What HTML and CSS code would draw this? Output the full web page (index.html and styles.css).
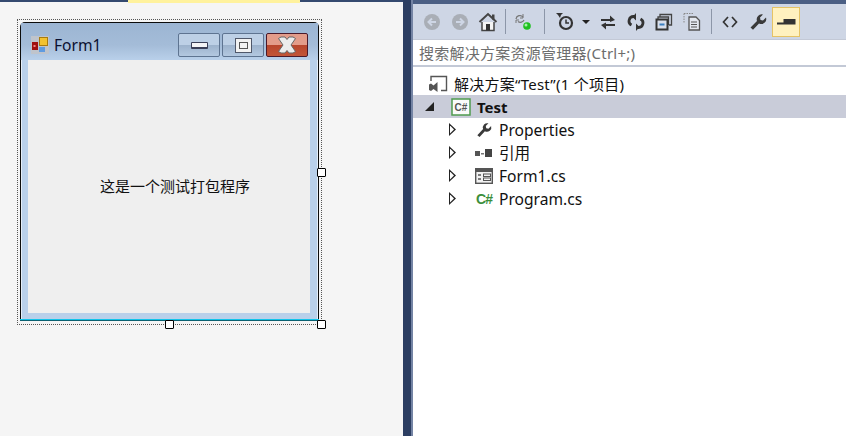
FILE: index.html
```html
<!DOCTYPE html>
<html lang="zh">
<head>
<meta charset="utf-8">
<title>Form1 - Test</title>
<link rel="stylesheet" href="styles.css">
</head>
<body>
<main class="app">
  <section class="designer">
    <div class="strip"><span class="strip-a"></span><span class="strip-b"></span><span class="strip-c"></span></div>
    <div class="selection">
      <div class="form">
        <div class="titlebar">
          <svg class="form-icon" width="18" height="18" viewBox="0 0 18 18">
            <rect width="18" height="18" fill="#bfc4cc"/>
            <rect x="1" y="6" width="6" height="8" fill="#a01010"/><rect x="2.500" y="9" width="2" height="2" fill="#f08080"/>
            <rect x="8.500" y="1.500" width="8" height="8" fill="#f2c230" stroke="#a87b10"/>
            <rect x="8" y="11" width="6" height="5" fill="#5f9be0"/>
          </svg>
          <span class="form-title">Form1</span>
          <div class="caption-btns">
            <div class="cap cap-min"><span class="min-glyph"></span></div>
            <div class="cap cap-max"><span class="max-glyph"></span></div>
            <div class="cap cap-close">
              <svg width="20" height="18" viewBox="0 0 20 18"><path d="M1.500 2.500 4 1h4l2 2.500L12 1h4l2.500 1.500L14 9l4.500 6.500L16 17h-4l-2-2.500L8 17H4l-2.500-1.500L6 9z" fill="#ececec" stroke="#666" stroke-width="1"/></svg>
            </div>
          </div>
        </div>
        <div class="client"><span class="label">这是一个测试打包程序</span></div>
        <i class="rim"></i>
      </div>
      <i class="handle h-right"></i><i class="handle h-bottom"></i><i class="handle h-corner"></i>
    </div>
  </section>
  <div class="splitter"></div>
  <section class="explorer">
    <div class="topline"></div>
    <div class="toolbar">
      <span class="tool"><svg width="18" height="18" viewBox="0 0 18 18"><circle cx="9" cy="9" r="8" fill="#a9aeb6"/><path d="M13 9H6M9 5.500 5.500 9 9 12.500" fill="none" stroke="#ced6e5" stroke-width="2"/></svg></span>
      <span class="tool"><svg width="18" height="18" viewBox="0 0 18 18"><circle cx="9" cy="9" r="8" fill="#a9aeb6"/><path d="M5 9h7M9 5.500 12.500 9 9 12.500" fill="none" stroke="#ced6e5" stroke-width="2"/></svg></span>
      <span class="tool"><svg width="20" height="20" viewBox="0 0 20 20"><path d="M1.500 10 10 2l8.500 8" fill="none" stroke="#444" stroke-width="2"/><path d="M4 10v8.500h12V10" fill="#f4f4f4" stroke="#444" stroke-width="1.500"/><rect x="8" y="12" width="4" height="6.500" fill="#333"/><rect x="14" y="2.500" width="2.500" height="5" fill="#444"/></svg></span>
      <span class="sep"></span>
      <span class="tool tool-sync"><svg width="20" height="20" viewBox="0 0 20 20"><path d="M3 7a4 4 0 0 1 7-2M11 8a4 4 0 0 1-6 1.500" fill="none" stroke="#777" stroke-width="1.300"/><path d="M10 2v4H7M3 11V8h3" fill="none" stroke="#777"/><circle cx="14" cy="14" r="3.800" fill="#1fc01f"/><circle cx="13" cy="13" r="1.500" fill="#a6f2a6"/></svg></span>
      <span class="sep sep-b"></span>
      <span class="tool"><svg width="20" height="20" viewBox="0 0 20 20"><circle cx="11" cy="11" r="6" fill="none" stroke="#333" stroke-width="2.200"/><path d="M11 7.500V11h3" fill="none" stroke="#333" stroke-width="1.500"/><path d="M1 1h7L6 3l-1 3-2-3z" fill="#333"/></svg></span>
      <span class="drop"></span>
      <span class="tool"><svg width="18" height="18" viewBox="0 0 18 18"><path d="M2 7h10" fill="none" stroke="#333" stroke-width="2"/><path d="M11 2.500 16 7l-5 2z" fill="#333"/><path d="M16 12H6" fill="none" stroke="#333" stroke-width="2"/><path d="M7 9.500 2 12l5 4.500z" fill="#333"/></svg></span>
      <span class="tool"><svg width="18" height="18" viewBox="0 0 18 18"><path d="M9 3.500H6.500a4.500 4.500 0 0 0-2 8.500M9 14.500h2.500a4.500 4.500 0 0 0 2-8.500" fill="none" stroke="#333" stroke-width="2.800"/><path d="M9 0v7.500L5.500 4zM9 18v-7.500l3.500 3.500z" fill="#333"/></svg></span>
      <span class="tool"><svg width="18" height="18" viewBox="0 0 18 18"><path d="M5 4V1.500h11.500V12H14M3 7V4h10.500v8" fill="none" stroke="#444" stroke-width="1.300"/><rect x="1.500" y="6.500" width="11" height="10" fill="#d8deea" stroke="#333" stroke-width="2"/><rect x="4.500" y="10.500" width="5" height="2" fill="#3a7fc0"/></svg></span>
      <span class="tool"><svg width="18" height="20" viewBox="0 0 18 20"><path d="M1 1.500h9M1 1.500v9" fill="none" stroke="#888" stroke-dasharray="1.500 1"/><path d="M6 5h7l3.500 3.500V18H6z" fill="#e4e8f0" stroke="#555" stroke-width="1.300"/><path d="M8 10h6M8 12.500h6M8 15h6" stroke="#555"/></svg></span>
      <span class="sep sep-c"></span>
      <span class="tool tool-code"><svg width="16" height="12" viewBox="0 0 16 12"><path d="M6 1 1.500 6 6 11M10 1l4.500 5L10 11" fill="none" stroke="#333" stroke-width="1.700"/></svg></span>
      <span class="tool"><svg width="18" height="18" viewBox="0 0 18 18"><path d="M1.500 14.500 8 8a5 5 0 0 1 6-6.500l-3 3 .5 2.500 2.500.5 3-3A5 5 0 0 1 10 10.500L4 16.800z" fill="#3a3a3a"/></svg></span>
      <span class="pin"><span class="pin-glyph"></span></span>
    </div>
    <div class="search">搜索解决方案资源管理器(Ctrl+;)</div>
    <ul class="tree">
      <li class="row row-sol">
        <svg class="sol-icon" width="20" height="18" viewBox="0 0 20 18"><path d="M3 6V1.500h15.500v14H13" fill="none" stroke="#555" stroke-width="1.400"/><path d="M1 9.500 3 8.500l2.500 2 4-3.500v10l-4-3-2.500 2-2-1z" fill="#555"/></svg>
        <span class="sol-name">解决方案“Test”(1 个项目)</span>
      </li>
      <li class="row row-sel">
        <span class="tri-open"></span>
        <svg class="proj-icon" width="20" height="18" viewBox="0 0 20 18"><rect x="1" y="1" width="18" height="16" fill="#fafafa" stroke="#4f9a4f" stroke-width="1.500"/><text x="3.500" y="13" class="cs-mini">C#</text></svg>
        <strong class="proj-name">Test</strong>
      </li>
      <li class="row row-child">
        <span class="tri"></span>
        <span class="slot"><svg width="18" height="16" viewBox="0 0 18 18"><path d="M1.500 15 8 8a5 5 0 0 1 6-6.500l-3 3 .5 2.500 2.500.5 3-3A5 5 0 0 1 10 10.500L4 17z" fill="#3a3a3a"/></svg></span>
        <span class="name">Properties</span>
      </li>
      <li class="row row-child">
        <span class="tri"></span>
        <span class="slot"><svg width="20" height="10" viewBox="0 0 20 10"><rect x="1" y="3" width="5" height="5" fill="#555"/><rect x="7" y="5" width="3" height="1.500" fill="#777"/><rect x="11" y="1" width="7" height="8" fill="#444"/></svg></span>
        <span class="name">引用</span>
      </li>
      <li class="row row-child">
        <span class="tri"></span>
        <span class="slot"><svg width="18" height="16" viewBox="0 0 18 16"><rect x=".7" y=".7" width="16.600" height="14.600" fill="#f2f2f2" stroke="#555" stroke-width="1.400"/><rect x="1" y="1" width="16" height="3" fill="#555"/><path d="M3 7h3M3 11h3" stroke="#555" stroke-width="1.500"/><rect x="8.500" y="6" width="7" height="2.500" fill="none" stroke="#555"/><rect x="8.500" y="10" width="7" height="2.500" fill="none" stroke="#555"/></svg></span>
        <span class="name">Form1.cs</span>
      </li>
      <li class="row row-child">
        <span class="tri"></span>
        <span class="slot"><span class="cs">C#</span></span>
        <span class="name">Program.cs</span>
      </li>
    </ul>
  </section>
</main>
</body>
</html>
```
FILE: styles.css
```css
* { box-sizing: border-box; }
html, body { margin: 0; padding: 0; }
body { width: 846px; height: 436px; overflow: hidden; font-family: "Noto Sans", "Noto Sans CJK SC", sans-serif; color: #111; }
.app { display: flex; width: 846px; height: 436px; }

.designer { width: 403px; background: #f5f5f5; }
.strip { display: flex; height: 3px; }
.strip-a { width: 128px; background: linear-gradient(#34496f 2px, #f5f5f5 2px); }
.strip-b { width: 172px; background: #fff29d; }
.strip-c { flex: 1; background: linear-gradient(#34496f 2px, #f5f5f5 2px); }

.selection { position: relative; width: 305px; height: 306px; margin: 16px 0 0 17px; padding: 2px 1px 2px 2px; border: 1px dotted #555; }
.form { position: relative; display: flex; flex-direction: column; width: 299px; height: 299px; border: 1px solid #0c0c0c; border-bottom: 0; border-radius: 5px 5px 0 0; background: #b9d0ea; box-shadow: inset 1px 0 0 #e3edf8, inset -1px 0 0 #e3edf8; }
.rim { position: absolute; left: -1px; right: -1px; bottom: 0; height: 2px; background: #12c4ea; border-bottom: 1px solid #0a6070; }
.titlebar { display: flex; align-items: center; height: 37px; padding: 7px 0 0 10px; background: linear-gradient(#9cb5d3 0, #a4bcd8 22px, #b9d0ea 37px); }
.form-icon { flex: none; }
.form-title { margin-left: 5px; font-size: 15.600px; color: #0b1030; }
.caption-btns { display: flex; gap: 2px; margin-left: auto; margin-right: 10px; }
.cap { display: flex; align-items: center; justify-content: center; width: 42px; height: 24px; border: 1px solid #5e7491; border-radius: 2px; background: linear-gradient(#bdd0e6 50%, #9cb2cc 50%, #b3c8e0); }
.cap-close { border-color: #4b1a2a; background: linear-gradient(#e39c8a 50%, #b8452c 50%, #c25638); }
.min-glyph { width: 17px; height: 7px; background: #f4f4f6; border: 1px solid #3a3f58; border-bottom-width: 2px; border-radius: 1px; }
.max-glyph { display: block; width: 17px; height: 15px; background: #f2f2f2; border: 1px solid #50586a; box-shadow: inset 0 0 0 3px #f2f2f2, inset 0 0 0 4px #555; }
.client { display: flex; align-items: center; justify-content: center; width: 282px; height: 253px; margin-left: 7px; padding: 0 0 2px 12px; background: #efefef; }
.label { font-size: 15px; line-height: 20px; white-space: nowrap; }

.handle { position: absolute; width: 9px; height: 9px; background: #fff; border: 1px solid #000; border-radius: 1px; }
.h-right { right: -5px; top: 148px; }
.h-bottom { left: 147px; bottom: -5px; }
.h-corner { right: -5px; bottom: -5px; }

.splitter { width: 10px; background: #2c3e62; border-right: 2px solid #7484a4; }

.explorer { flex: 1; display: flex; flex-direction: column; background: #fff; font-size: 15px; }
.topline { height: 4px; background: #4b5f84; }
.toolbar { display: flex; align-items: center; height: 35px; padding: 0 0 0 5px; background: #ced6e5; }
.tool { display: flex; align-items: center; justify-content: center; flex: none; width: 28px; height: 28px; }
.tool-sync { margin-left: 3px; }
.sep { flex: none; width: 1px; height: 25px; margin-left: 3px; background: #8c96a8; }
.sep-b { margin-left: 7px; margin-right: 6px; }
.sep-c { margin-left: 5px; margin-right: 4px; }
.tool-code { width: 28px; }
.drop { flex: none; width: 0; height: 0; margin: 0 4px 0 3px; border: 4px solid transparent; border-top-color: #222; border-bottom: 0; }
.pin { display: flex; align-items: center; justify-content: center; flex: none; width: 28px; height: 30px; background: #fff1bf; border: 1px solid #e5c365; }
.pin-glyph { display: block; width: 19px; height: 6px; background: #333; clip-path: polygon(0 4px, 7px 4px, 7px 0, 100% 0, 100% 100%, 0 100%); }
.search { display: flex; align-items: center; height: 27px; padding-left: 6px; background: #fff; color: #6d6d6d; letter-spacing: .25px; box-shadow: 0 1px 0 #c3c9d6; border-bottom: 1px solid #c3c9d6; border-top: 1px solid #c3c9d6; }
.tree { list-style: none; margin: 6px 0 0; padding: 0; }
.row { display: flex; align-items: center; height: 23px; padding-left: 16px; }
.row-sol { padding-left: 15px; }
.sol-icon { margin-right: 6px; }
.sol-name { letter-spacing: .25px; }
.row-sel { background: #c9ccd9; }
.tri-open { width: 0; height: 0; margin-right: 19px; margin-left: -4px; border-style: solid; border-width: 0 0 9px 9px; border-color: transparent transparent #222 transparent; }
.proj-icon { margin-right: 6px; margin-left: -2px; }
.cs-mini { font-family: "Liberation Sans", sans-serif; font-size: 10px; font-weight: 700; fill: #555; }
.proj-name { font-weight: 700; }
.row-child { padding-left: 36px; }
.name { font-size: 15.600px; }
.tri { position: relative; width: 7px; height: 13px; margin-right: 17px; background: #222; clip-path: polygon(0 0, 100% 50%, 0 100%); }
.tri::after { content: ""; position: absolute; left: 1px; top: 2.500px; width: 4px; height: 8px; background: #fff; clip-path: polygon(0 0, 100% 50%, 0 100%); }
.slot { display: flex; align-items: center; justify-content: center; width: 22px; margin-right: 4px; }
.cs { font-family: "Liberation Sans", sans-serif; font-size: 14px; font-weight: 700; color: #3c8f3c; letter-spacing: -1px; }
```
